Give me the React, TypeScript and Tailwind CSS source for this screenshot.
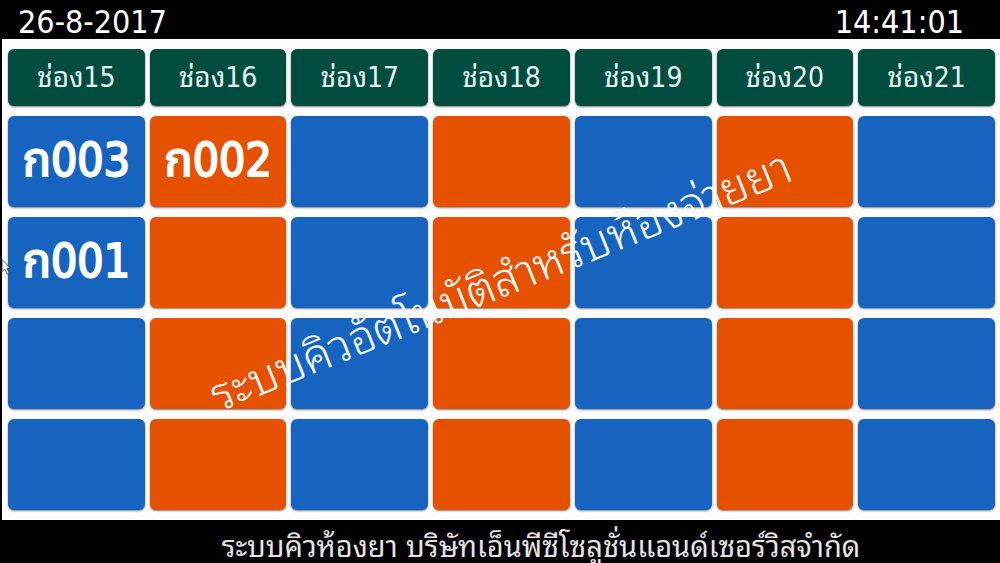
const channels = [15, 16, 17, 18, 19, 20, 21];

const rows: Record<number, string>[] = [
  { 15: "ก003", 16: "ก002" },
  { 15: "ก001" },
  {},
  {},
];

function Pointer() {
  return (
    <svg
      className="absolute top-[259px] left-0 h-4 w-3"
      viewBox="0 0 12 16"
      aria-hidden="true"
    >
      <path
        d="M0 0.5V12.5L2.8 10L5 15L7 14L5 9.3H8.6Z"
        fill="#fff"
        stroke="#333"
        strokeWidth="0.8"
      />
    </svg>
  );
}

export default function App() {
  return (
    <div className="relative flex min-h-screen flex-col overflow-hidden border-l-2 border-black bg-[#fdfdfe] font-['DejaVu_Sans_Condensed','Noto_Sans_Thai_Looped','Noto_Looped_Thai','TH_Sarabun_New','Sarabun','Garuda','Loma','Waree','Noto_Serif_Thai',sans-serif]">
      <header className="flex h-[39px] items-center justify-between bg-black pt-1 pr-9 pl-4 text-[32px] leading-none text-white">
        <time>26-8-2017</time>
        <time>14:41:01</time>
      </header>

      <main className="pl-px">
        <table className="w-full table-fixed border-separate border-spacing-x-[5px] border-spacing-y-2.5">
          <thead>
            <tr>
              {channels.map((n) => (
                <th
                  key={n}
                  scope="col"
                  className="h-[57px] rounded-md bg-[#004d40] p-0 text-[28px] leading-none font-normal text-[#e6f3f3] shadow-[0_1px_2px_rgba(0,0,0,0.5)]"
                >
                  ช่อง{n}
                </th>
              ))}
            </tr>
          </thead>
          <tbody>
            {rows.map((row, i) => (
              <tr key={i}>
                {channels.map((n) => (
                  <td
                    key={n}
                    className="h-[91px] rounded-md bg-[#1763c0] p-0 pb-1 text-center text-[46px] leading-none text-white shadow-[0_1px_2px_rgba(0,0,0,0.5)] [-webkit-text-stroke:2px_white] even:bg-[#e65100]"
                  >
                    {row[n]}
                  </td>
                ))}
              </tr>
            ))}
          </tbody>
        </table>
      </main>

      <footer className="flex grow items-center justify-center bg-black pt-3 pl-20 text-[29px] leading-none whitespace-nowrap text-[#e4e4e4]">
        ระบบคิวห้องยา บริษัทเอ็นพีซีโซลูชั่นแอนด์เซอร์วิสจำกัด
      </footer>

      <p className="pointer-events-none absolute top-[281px] left-1/2 -translate-x-1/2 -translate-y-1/2 -rotate-[22deg] text-[46px] leading-none font-light whitespace-nowrap text-[#f3f8f6]">
        ระบบคิวอัตโนมัติสำหรับห้องจ่ายยา
      </p>
      <Pointer />
    </div>
  );
}
